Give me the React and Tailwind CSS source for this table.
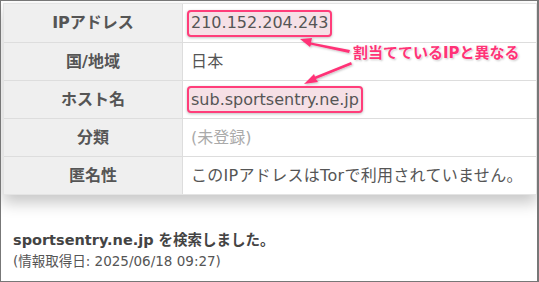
import React from "react";

const rows = [
  { label: "IPアドレス", value: "210.152.204.243", mark: true },
  { label: "国/地域", value: "日本" },
  { label: "ホスト名", value: "sub.sportsentry.ne.jp", mark: true },
  { label: "分類", value: "(未登録)", muted: true },
  { label: "匿名性", value: "このIPアドレスはTorで利用されていません。" },
];

const font = { fontFamily: '"DejaVu Sans", "Noto Sans CJK JP", sans-serif' };

const Arrows = () => (
  <svg className="absolute left-0 top-0 pointer-events-none" width="539" height="282">
    <defs>
      <filter id="sh" x="-20%" y="-20%" width="140%" height="140%">
        <feDropShadow dx="1" dy="1" stdDeviation="1" floodColor="#000" floodOpacity="0.25" />
      </filter>
    </defs>
    <g fill="#ff3377" filter="url(#sh)">
      <polygon points="349,49 310,41.5 311,37 299,38 309,46 310,43.8 348,52" />
      <polygon points="350,61 314,75.5 313,73 303,83 317,81 315,78 351,63.5" />
    </g>
  </svg>
);

export default function App() {
  return (
    <div className="relative w-[539px] h-[282px] bg-white border border-[#777] border-r-2 overflow-hidden" style={font}>
      <div className="mt-[2px] ml-[2px] w-[534px] border border-[#e4e4e4] shadow-[0_8px_14px_rgba(0,0,0,0.22)]">
        {rows.map((r, i) => (
          <div key={i} className={`grid grid-cols-[179px_1fr] h-[38px] ${i > 0 ? "border-t border-[#dddddd]" : ""}`}>
            <div className="bg-[#efefef] border-r border-[#dddddd] flex items-center justify-center text-[16px] font-bold text-[#555]">
              {r.label}
            </div>
            <div className="bg-white flex items-center pl-[4px] text-[16px]">
              {r.mark ? (
                <span className="px-[2px] h-[27px] flex items-center rounded-[4px] border-2 border-[#ff3d7a] bg-[#f6e0e6] text-[#555] shadow-[0_1px_3px_rgba(0,0,0,0.25)]">
                  {r.value}
                </span>
              ) : (
                <span className={`pl-[4px] ${r.muted ? "text-[#aaa]" : "text-[#555] tracking-[0.3px]"}`}>{r.value}</span>
              )}
            </div>
          </div>
        ))}
      </div>

      <div className="mt-[35px] pl-[12px] text-[14.5px] font-bold text-[#444] leading-[20px]">
        sportsentry.ne.jp を検索しました。
      </div>
      <div className="mt-[2px] pl-[12px] text-[13.5px] text-[#555] leading-[18px]">
        (情報取得日: 2025/06/18 09:27)
      </div>

      <Arrows />
      <div
        className="absolute left-[352px] top-[42px] text-[15px] font-bold text-[#ff3377] leading-[20px] whitespace-nowrap"
        style={{ ...font, textShadow: "0 0 2px #fff, 0 0 3px #fff, 1px 1px 2px rgba(0,0,0,0.3)" }}
      >
        割当てているIPと異なる
      </div>
    </div>
  );
}
